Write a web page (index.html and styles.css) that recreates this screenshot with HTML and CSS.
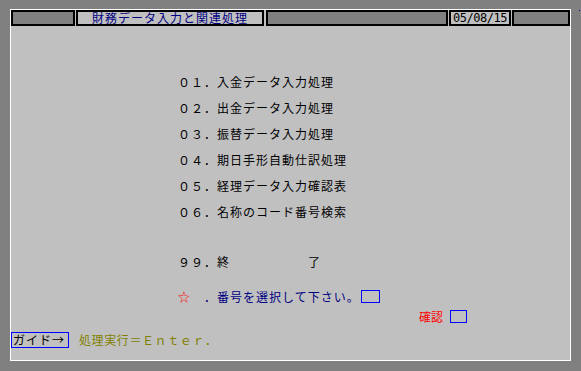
FILE: index.html
```html
<!DOCTYPE html>
<html lang="ja">
    <head>
        <meta charset="UTF-8" />
        <meta name="viewport" content="width=device-width, initial-scale=1.0" />
        <title>財務データ入力と関連処理</title>
        <link rel="stylesheet" href="styles.css">
    </head>
    <body>
        <span class="dot"></span>
        <div class="panel">
            <!-- 上部タイトルバー -->
            <div class="bar">
                <div class="cell w1"></div>
                <div class="cell lt w2 ttl">財務データ入力と関連処理</div>
                <div class="cell w3"></div>
                <div class="cell lt w4 date">05/08/15</div>
                <div class="cell w5"></div>
            </div>

            <!-- メニュー -->
            <ul class="menu">
                <li>０１．入金データ入力処理</li>
                <li>０２．出金データ入力処理</li>
                <li>０３．振替データ入力処理</li>
                <li>０４．期日手形自動仕訳処理</li>
                <li>０５．経理データ入力確認表</li>
                <li>０６．名称のコード番号検索</li>
                <li class="end">９９．終　　　　　　了</li>
            </ul>

            <div class="ask">
                <span class="star">☆</span><span class="askTx">　．番号を選択して下さい。</span><span class="inp"></span>
            </div>
            <div class="ok">
                <span class="okTx">確認</span><span class="inp sm"></span>
            </div>

            <!-- 下部ガイド -->
            <div class="foot">
                <span class="guide">ガイド→</span>
                <span class="run">処理実行＝Ｅｎｔｅｒ．</span>
            </div>
        </div>
    </body>
</html>
```

FILE: styles.css
```css
html,
body {
    margin: 0;
    padding: 0;
}
body {
    height: 371px;
    background: #808080;
    font-family: "Noto Sans CJK JP", sans-serif;
    font-size: 12px;
    letter-spacing: 1px;
    color: #000;
    position: relative;
    overflow: hidden;
}
/* 右上の小さな点 */
.dot {
    position: absolute;
    top: 10px;
    left: 579px;
    width: 1px;
    height: 1px;
    background: #0000c0;
}
/* 画面パネル */
.panel {
    box-sizing: border-box;
    width: 561px;
    height: 352px;
    margin: 9px 0 0 10px;
    border: 1px solid #fff;
    background: #c0c0c0;
    display: flex;
    flex-direction: column;
}
/* タイトルバー */
.bar {
    display: flex;
    height: 16px;
}
.cell {
    box-sizing: border-box;
    height: 16px;
    border: 2px solid #000;
    background: #808080;
    line-height: 12px;
    text-align: center;
}
.cell.lt {
    background: #c0c0c0;
}
.w1 { width: 64px; }
.w2 { width: 188px; margin-left: 1px; }
.w3 { width: 182px; margin-left: 2px; }
.w4 { width: 62px; margin-left: 1px; }
.w5 { width: 58px; margin-left: 1px; }
.ttl {
    color: #000080;
}
.date {
    font-family: "DejaVu Sans Mono", monospace;
    font-size: 12px;
    letter-spacing: -0.5px;
    white-space: nowrap;
}

/* メニュー */
.menu {
    margin: 43px 0 0;
    padding: 0 0 0 167px;
    list-style: none;
}
.menu li {
    line-height: 26px;
    height: 26px;
}
.menu .end {
    margin-top: 24px;
}
.ask {
    margin-top: 9px;
    padding-left: 167px;
    height: 26px;
    line-height: 26px;
    display: flex;
    align-items: flex-start;
}
.star {
    color: #ff0000;
}
.askTx {
    color: #000080;
}
.inp {
    display: block;
    flex: none;
    box-sizing: border-box;
    width: 19px;
    height: 13px;
    margin: 6px 0 0 1px;
    border: 1px solid #0000ff;
}
.ok {
    display: flex;
    justify-content: flex-end;
    align-items: flex-start;
    height: 14px;
    padding-right: 103px;
}
.okTx {
    color: #ff0000;
    line-height: 14px;
    letter-spacing: 0;
    margin-right: 7px;
}
.inp.sm {
    width: 17px;
    margin: 0;
}

/* ガイド */
.foot {
    margin-top: auto;
    margin-bottom: 12px;
    display: flex;
    align-items: center;
}
.guide {
    box-sizing: border-box;
    width: 58px;
    height: 16px;
    border: 1px solid #0000ff;
    line-height: 14px;
    padding-left: 1px;
    white-space: nowrap;
}
.run {
    margin-left: 10px;
    color: #808000;
    letter-spacing: 0.6px;
}
```
